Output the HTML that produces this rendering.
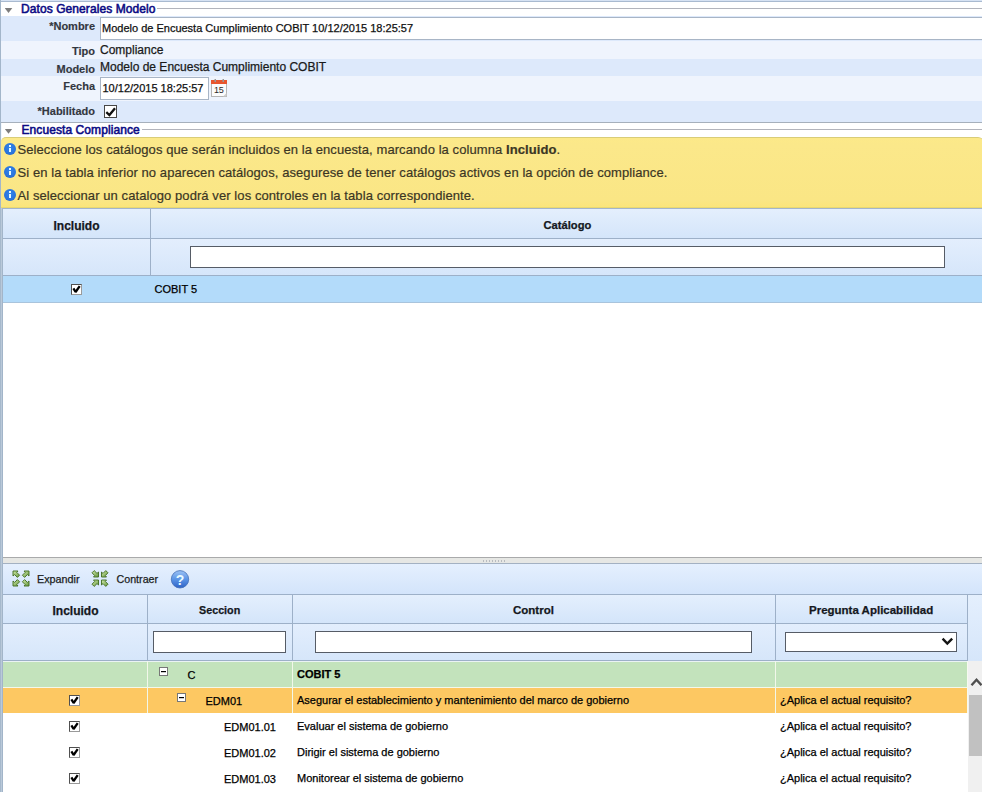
<!DOCTYPE html>
<html><head><meta charset="utf-8">
<style>
*{margin:0;padding:0;box-sizing:border-box}
html,body{width:982px;height:792px;overflow:hidden;background:#fff;font-family:"Liberation Sans",sans-serif;position:relative}
.a{position:absolute}
.t{position:absolute;white-space:nowrap;line-height:1;-webkit-text-stroke:0.25px currentColor}
.hl{position:absolute;height:1px}
.vl{position:absolute;width:1px}
.lbl{position:absolute;white-space:nowrap;line-height:1;-webkit-text-stroke:0.15px currentColor;font-size:11px;font-weight:bold;color:#33373f;text-align:right;right:887px}
.ttl{font-size:12px;color:#0b0b84;-webkit-text-stroke:0.55px currentColor;letter-spacing:0.08px}
.tri{position:absolute;width:8px;height:5.2px;background:#7d7d7d;clip-path:polygon(0 0,100% 0,50% 100%)}
.inp{position:absolute;background:#fff;border:1px solid #a8b5c6}
.inp2{position:absolute;background:#fff;border:1px solid #565c66}
.hdr{background:linear-gradient(#e4effd,#d4e5fa)}
.flt{background:linear-gradient(#e3eefd,#d6e6fa)}
.ht{font-size:11px;font-weight:bold;color:#15181e}
.cb{position:absolute;width:11px;height:11px;background:#fff;border-top:1px solid #505050;border-left:1px solid #505050;border-right:1px solid #9a9a9a;border-bottom:1px solid #9a9a9a}
.dt{font-size:11px;color:#000}
.info{position:absolute;width:12px;height:12px;border-radius:50%;background:radial-gradient(circle at 50% 40%,#3184ec 0,#2a74dc 60%,#1f5fc0 100%)}
.info:before{content:"";position:absolute;left:5px;top:2px;width:2px;height:2px;background:#e6fbff}
.info:after{content:"";position:absolute;left:5px;top:5px;width:2px;height:4px;background:#e6fbff}
</style></head><body>

<!-- outer frame -->
<div class="hl" style="left:0;top:0;width:982px;background:#d6e2f3"></div>
<div class="hl" style="left:0;top:1px;width:982px;background:#a9bad0"></div>
<div class="vl" style="left:0;top:0;height:208px;background:#a3b6ca"></div>
<div class="vl" style="left:1px;top:16px;height:192px;background:#f2f8ff"></div>

<!-- Section 1 header -->
<div class="tri" style="left:4.5px;top:7.7px"></div>
<div class="t ttl" style="left:21px;top:3px">Datos Generales Modelo</div>
<div class="hl" style="left:157px;top:8px;width:825px;background:#b2b4bc"></div>

<!-- form rows -->
<div class="a" style="left:1px;top:16px;width:981px;height:25px;background:#dde9fb"></div>
<div class="a" style="left:1px;top:41px;width:981px;height:18px;background:#eff4fd"></div>
<div class="a" style="left:1px;top:59px;width:981px;height:17px;background:#dde9fb"></div>
<div class="a" style="left:1px;top:76px;width:981px;height:25px;background:#eff4fd"></div>
<div class="a" style="left:1px;top:101px;width:981px;height:21px;background:#dde9fb"></div>

<div class="lbl" style="top:21px">*Nombre</div>
<div class="inp" style="left:100px;top:17px;width:890px;height:23px"></div>
<div class="t" style="left:102px;top:23px;font-size:11px;color:#111">Modelo de Encuesta Cumplimiento COBIT 10/12/2015 18:25:57</div>

<div class="lbl" style="top:46px">Tipo</div>
<div class="t" style="left:100px;top:43.5px;font-size:12px;color:#1a1a1a">Compliance</div>

<div class="lbl" style="top:63.5px">Modelo</div>
<div class="t" style="left:100px;top:60.5px;font-size:12px;color:#1a1a1a">Modelo de Encuesta Cumplimiento COBIT</div>

<div class="lbl" style="top:80.5px">Fecha</div>
<div class="inp" style="left:100px;top:77px;width:109px;height:23px"></div>
<div class="t" style="left:102.5px;top:82.5px;font-size:11px;color:#111">10/12/2015 18:25:57</div>
<!-- calendar icon -->
<svg class="a" style="left:210px;top:78px" width="18" height="20" viewBox="0 0 18 20">
  <rect x="1.5" y="5.5" width="15" height="13" fill="#fcfcfc" stroke="#b5b5b5"/>
  <rect x="1" y="2" width="16" height="4" fill="#e8562e"/>
  <rect x="4.5" y="1" width="1.5" height="3" fill="#9a9a9a"/>
  <rect x="12.5" y="1" width="1.5" height="3" fill="#9a9a9a"/>
  <text x="8.8" y="14.8" font-family="Liberation Sans" font-size="9" letter-spacing="-0.3" text-anchor="middle" fill="#2a2a2a">15</text>
  <path d="M13 18.5 L16.5 15 L16.5 18.5 Z" fill="#d0d0d0"/>
</svg>

<div class="lbl" style="top:106px">*Habilitado</div>
<div class="a" style="left:104px;top:105px;width:13px;height:13px;background:#fff;border:1px solid #474747"></div>
<svg class="a" style="left:104px;top:105px" width="13" height="13" viewBox="0 0 13 13"><path d="M2.3 7.2 L5.4 10 L11 3.2" fill="none" stroke="#111" stroke-width="2.3"/></svg>

<div class="hl" style="left:1px;top:122px;width:981px;background:#a6b0bc"></div>

<!-- Section 2 header -->
<div class="tri" style="left:4.5px;top:128.5px"></div>
<div class="t ttl" style="left:21.5px;top:123.5px">Encuesta Compliance</div>
<div class="hl" style="left:142px;top:129px;width:840px;background:#b2b4bc"></div>

<!-- yellow info box -->
<div class="a" style="left:1px;top:137px;width:983px;height:71px;background:linear-gradient(#fce989 0,#fbe88a 8px,#fae685 62px,#fbe57a 70px);border-radius:5px 6px 0 0;border-top:1px solid #d9cd78;border-bottom:1px solid #e9d872"></div>
<div class="info" style="left:4px;top:143px"></div>
<div class="info" style="left:4px;top:166px"></div>
<div class="info" style="left:4px;top:189px"></div>
<div class="t" style="left:17.5px;top:142.5px;font-size:13px;color:#3b3624;letter-spacing:0.08px;-webkit-text-stroke:0.2px currentColor">Seleccione los catálogos que serán incluidos en la encuesta, marcando la columna <b>Incluido</b>.</div>
<div class="t" style="left:17.5px;top:165.5px;font-size:13px;color:#3b3624;letter-spacing:0.08px;-webkit-text-stroke:0.2px currentColor">Si en la tabla inferior no aparecen catálogos, asegurese de tener catálogos activos en la opción de compliance.</div>
<div class="t" style="left:17.5px;top:188.5px;font-size:13px;color:#3b3624;letter-spacing:0.08px;-webkit-text-stroke:0.2px currentColor">Al seleccionar un catalogo podrá ver los controles en la tabla correspondiente.</div>

<!-- upper table -->
<div class="a" style="left:1px;top:208px;width:981px;height:350px;background:#fff"></div>
<div class="hl" style="left:1px;top:208px;width:981px;background:#a3b5cc"></div>
<div class="a hdr" style="left:1px;top:209px;width:981px;height:29px"></div>
<div class="hl" style="left:1px;top:238px;width:981px;background:#9db0c8"></div>
<div class="a flt" style="left:1px;top:239px;width:981px;height:36px"></div>
<div class="hl" style="left:1px;top:275px;width:981px;background:#9db0c8"></div>
<div class="a" style="left:1px;top:276px;width:981px;height:26px;background:#b3dbfa"></div>
<div class="hl" style="left:1px;top:302px;width:981px;background:#a9c4dc"></div>
<div class="vl" style="left:150px;top:209px;height:66px;background:#9db0c8"></div>
<div class="t ht" style="left:53.5px;top:219.5px;font-size:12px">Incluido</div>
<div class="t ht" style="left:543.5px;top:219.5px;font-size:11.2px">Catálogo</div>
<div class="inp2" style="left:190px;top:246px;width:755px;height:22px"></div>
<div class="cb" style="left:71px;top:284px"></div>
<svg class="a" style="left:71px;top:284px" width="11" height="11" viewBox="0 0 11 11"><path d="M2.4 4.4 L4.6 8 L8.7 2.2" fill="none" stroke="#000" stroke-width="2.3" stroke-linejoin="bevel"/></svg>
<div class="t dt" style="left:154.5px;top:283.7px">COBIT 5</div>

<!-- splitter -->
<div class="hl" style="left:1px;top:557px;width:981px;background:#a9aaab"></div>
<div class="a" style="left:1px;top:558px;width:981px;height:5px;background:#e6e7e4"></div>
<div class="hl" style="left:1px;top:563px;width:981px;background:#a3b1c2"></div>
<svg class="a" style="left:482px;top:559.5px" width="26" height="3"><g fill="#8a8f99">
<rect x="1" y="0.5" width="1" height="1"/><rect x="4" y="0.5" width="1" height="1"/><rect x="7" y="0.5" width="1" height="1"/><rect x="10" y="0.5" width="1" height="1"/><rect x="13" y="0.5" width="1" height="1"/><rect x="16" y="0.5" width="1" height="1"/><rect x="19" y="0.5" width="1" height="1"/><rect x="22" y="0.5" width="1" height="1"/></g></svg>

<!-- toolbar -->
<div class="a" style="left:1px;top:564px;width:981px;height:30px;background:linear-gradient(#e5f0fe,#d3e4fb)"></div>
<div class="hl" style="left:1px;top:594px;width:981px;background:#9db0c8"></div>
<!-- expand icon -->
<svg class="a" style="left:12px;top:570px" width="18" height="17" viewBox="0 0 18 17"><defs><linearGradient id="ag" x1="0" y1="0" x2="1" y2="1"><stop offset="0" stop-color="#d2ecae"/><stop offset="1" stop-color="#64953a"/></linearGradient></defs><g fill="url(#ag)" stroke="#3f6a1e" stroke-width="0.9" stroke-linejoin="miter">
<path d="M1 1 H6 L4.8 2.4 L7.6 5.2 L5.4 7.4 L2.6 4.6 L1 6 Z"/>
<path d="M17 1 H12 L13.2 2.4 L10.4 5.2 L12.6 7.4 L15.4 4.6 L17 6 Z"/>
<path d="M1 16 H6 L4.8 14.6 L7.6 11.8 L5.4 9.6 L2.6 12.4 L1 11 Z"/>
<path d="M17 16 H12 L13.2 14.6 L10.4 11.8 L12.6 9.6 L15.4 12.4 L17 11 Z"/>
</g></svg>
<div class="t" style="left:37px;top:573.5px;font-size:10.8px;color:#1b1d22">Expandir</div>
<!-- contract icon -->
<svg class="a" style="left:91px;top:570px" width="18" height="17" viewBox="0 0 18 17"><g fill="url(#ag)" stroke="#3f6a1e" stroke-width="0.9" stroke-linejoin="miter">
<path d="M7.5 7 H2.5 L3.7 5.6 L1 2.8 L3.2 0.6 L6 3.4 L7.5 2 Z"/>
<path d="M10.5 7 H15.5 L14.3 5.6 L17 2.8 L14.8 0.6 L12 3.4 L10.5 2 Z"/>
<path d="M7.5 10 H2.5 L3.7 11.4 L1 14.2 L3.2 16.4 L6 13.6 L7.5 15 Z"/>
<path d="M10.5 10 H15.5 L14.3 11.4 L17 14.2 L14.8 16.4 L12 13.6 L10.5 15 Z"/>
</g></svg>
<div class="t" style="left:116.5px;top:573.5px;font-size:10.7px;color:#1b1d22">Contraer</div>
<!-- help icon -->
<svg class="a" style="left:170px;top:570px" width="20" height="19" viewBox="0 0 20 19">
<defs><linearGradient id="hg" x1="0" y1="0" x2="0" y2="1"><stop offset="0" stop-color="#9cc2f4"/><stop offset="0.5" stop-color="#5a94e6"/><stop offset="1" stop-color="#2f62c6"/></linearGradient></defs>
<circle cx="10" cy="9.3" r="8.7" fill="url(#hg)" stroke="#4470b8" stroke-width="0.8"/>
<text x="10" y="14.6" font-family="Liberation Sans" font-weight="bold" font-size="14" text-anchor="middle" fill="#e8fbff">?</text>
</svg>

<!-- lower table -->
<div class="a hdr" style="left:1px;top:595px;width:981px;height:28px"></div>
<div class="hl" style="left:1px;top:623px;width:967px;background:#9db0c8"></div>
<div class="a flt" style="left:1px;top:624px;width:981px;height:36px"></div>
<div class="hl" style="left:1px;top:660px;width:967px;background:#9db0c8"></div>
<div class="vl" style="left:147px;top:595px;height:65px;background:#9db0c8"></div>
<div class="vl" style="left:292px;top:595px;height:65px;background:#9db0c8"></div>
<div class="vl" style="left:775px;top:595px;height:65px;background:#9db0c8"></div>
<div class="vl" style="left:967px;top:595px;height:65px;background:#9db0c8"></div>
<div class="t ht" style="left:52.5px;top:604.5px;font-size:12px">Incluido</div>
<div class="t ht" style="left:199px;top:604.5px;font-size:10.75px">Seccion</div>
<div class="t ht" style="left:513px;top:604.5px;font-size:11.5px">Control</div>
<div class="t ht" style="left:809px;top:604.5px;font-size:11.5px">Pregunta Aplicabilidad</div>
<div class="inp2" style="left:153px;top:631px;width:133px;height:22px"></div>
<div class="inp2" style="left:315px;top:631px;width:437px;height:22px"></div>
<div class="inp2" style="left:785px;top:632px;width:172px;height:20px"></div>
<svg class="a" style="left:941px;top:637px" width="14" height="10"><path d="M1.6 1.6 L6.3 6.6 L11.2 1.6" fill="none" stroke="#151515" stroke-width="2.4"/></svg>

<!-- rows -->
<div class="hl" style="left:1px;top:661px;width:967px;background:#eaf3f4"></div>
<div class="a" style="left:1px;top:662px;width:967px;height:25px;background:#c3e3bc"></div>
<div class="a" style="left:1px;top:688px;width:967px;height:25px;background:#fdc862"></div>
<div class="hl" style="left:1px;top:687px;width:967px;background:#f4f8ea"></div>
<div class="vl" style="left:147px;top:661px;height:52px;background:#f2f7ea"></div>
<div class="vl" style="left:292px;top:661px;height:52px;background:#f2f7ea"></div>
<div class="vl" style="left:775px;top:661px;height:52px;background:#f2f7ea"></div>
<div class="vl" style="left:967px;top:661px;height:52px;background:#f6faf0"></div>
<div class="a" style="left:968px;top:595px;width:14px;height:66px;background:linear-gradient(#e4effd,#d6e6fa)"></div>

<!-- green row -->
<svg class="a" style="left:159px;top:667px" width="9" height="9"><rect x="0.5" y="0.5" width="8" height="8" fill="#fff" stroke="#777"/><rect x="2" y="4" width="5" height="1.2" fill="#000"/></svg>
<div class="t dt" style="left:187.5px;top:670.2px">C</div>
<div class="t dt" style="left:297px;top:668.5px;font-weight:bold">COBIT 5</div>

<!-- orange row -->
<div class="cb" style="left:69px;top:695px"></div>
<svg class="a" style="left:69px;top:695px" width="11" height="11" viewBox="0 0 11 11"><path d="M2.4 4.4 L4.6 8 L8.7 2.2" fill="none" stroke="#000" stroke-width="2.3" stroke-linejoin="bevel"/></svg>
<svg class="a" style="left:177px;top:693px" width="9" height="9"><rect x="0.5" y="0.5" width="8" height="8" fill="#fff" stroke="#777"/><rect x="2" y="4" width="5" height="1.2" fill="#000"/></svg>
<div class="t dt" style="left:205.5px;top:695.5px">EDM01</div>
<div class="t dt" style="left:297px;top:694.5px">Asegurar el establecimiento y mantenimiento del marco de gobierno</div>
<div class="t dt" style="left:780px;top:694.5px">¿Aplica el actual requisito?</div>

<!-- white rows -->
<div class="cb" style="left:69px;top:721px"></div>
<svg class="a" style="left:69px;top:721px" width="11" height="11" viewBox="0 0 11 11"><path d="M2.4 4.4 L4.6 8 L8.7 2.2" fill="none" stroke="#000" stroke-width="2.3" stroke-linejoin="bevel"/></svg>
<div class="t dt" style="left:224px;top:721.5px">EDM01.01</div>
<div class="t dt" style="left:297px;top:720.5px">Evaluar el sistema de gobierno</div>
<div class="t dt" style="left:780px;top:720.5px">¿Aplica el actual requisito?</div>

<div class="cb" style="left:69px;top:747px"></div>
<svg class="a" style="left:69px;top:747px" width="11" height="11" viewBox="0 0 11 11"><path d="M2.4 4.4 L4.6 8 L8.7 2.2" fill="none" stroke="#000" stroke-width="2.3" stroke-linejoin="bevel"/></svg>
<div class="t dt" style="left:224px;top:747.5px">EDM01.02</div>
<div class="t dt" style="left:297px;top:746.5px">Dirigir el sistema de gobierno</div>
<div class="t dt" style="left:780px;top:746.5px">¿Aplica el actual requisito?</div>

<div class="cb" style="left:69px;top:773px"></div>
<svg class="a" style="left:69px;top:773px" width="11" height="11" viewBox="0 0 11 11"><path d="M2.4 4.4 L4.6 8 L8.7 2.2" fill="none" stroke="#000" stroke-width="2.3" stroke-linejoin="bevel"/></svg>
<div class="t dt" style="left:224px;top:773.5px">EDM01.03</div>
<div class="t dt" style="left:297px;top:772.5px">Monitorear el sistema de gobierno</div>
<div class="t dt" style="left:780px;top:772.5px">¿Aplica el actual requisito?</div>

<!-- scrollbar -->
<div class="a" style="left:968px;top:661px;width:14px;height:131px;background:#f0f0f0"></div>
<svg class="a" style="left:968px;top:676px" width="14" height="12"><path d="M3.5 9.2 L8.5 3.8 L13.5 9.2" fill="none" stroke="#4f4f4f" stroke-width="2.4"/></svg>
<div class="a" style="left:969px;top:695px;width:13px;height:61px;background:#c1c1c1"></div>

<!-- left frame lower -->
<div class="vl" style="left:0;top:208px;height:584px;background:#a6b9cc"></div>
<div class="vl" style="left:1px;top:208px;height:584px;background:#bac9d9"></div>
<div class="vl" style="left:2px;top:208px;height:584px;background:#a2b5c9"></div>
</body></html>
